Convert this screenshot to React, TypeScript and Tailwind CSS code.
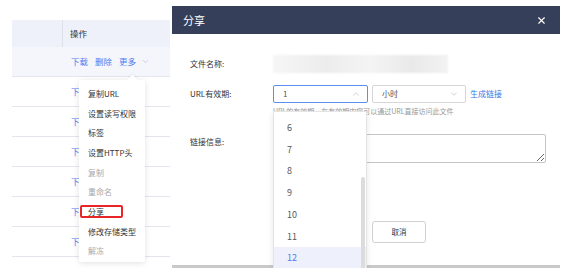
import { ChevronDown, ChevronUp, X } from "lucide-react";

const FONT = { fontFamily: '"Noto Sans CJK SC", "Noto Sans", sans-serif' };

const menuItems = [
  { label: "复制URL" },
  { label: "设置读写权限" },
  { label: "标签" },
  { label: "设置HTTP头" },
  { label: "复制", disabled: true },
  { label: "重命名", disabled: true },
  { label: "分享", marked: true },
  { label: "修改存储类型" },
  { label: "解冻", disabled: true },
];

const hours = ["6", "7", "8", "9", "10", "11", "12"];

function FileTable() {
  return (
    <div className="pt-[20px] pl-[12px] w-[170px]">
      {/* header */}
      <div className="flex h-[27px] bg-[#eef1f9] text-[8.5px] text-[#333]">
        <div className="w-[51px] border-r border-[#dde1ec]" />
        <div className="flex items-center pl-[7px]">操作</div>
      </div>
      {/* first row with actions */}
      <div className="flex h-[30px] bg-[#f5f6fb] border-b border-[#e3e6ef] text-[8.5px] text-[#4d7cf2]">
        <div className="w-[51px]" />
        <div className="flex items-center gap-[7px] pl-[8px]">
          <span>下载</span>
          <span>删除</span>
          <span className="flex items-center gap-[5px]">
            更多
            <ChevronDown size={9} strokeWidth={1.5} className="text-[#a6b4e0]" />
          </span>
        </div>
      </div>
      {[0, 1, 2, 3, 4, 5].map((i) => (
        <div key={i} className="flex h-[30px] border-b border-[#e3e6ef] text-[8.5px] text-[#4d7cf2]">
          <div className="w-[51px]" />
          <div className="flex items-center pl-[8px]">下载</div>
        </div>
      ))}
    </div>
  );
}

function MoreMenu() {
  return (
    <div className="absolute left-[79px] top-[80px] w-[66px] h-[182px] bg-white rounded-[2px] shadow-[0_1px_6px_rgba(0,0,0,0.12)] pt-[4px]">
      <div className="absolute -top-[4px] left-[50px] w-[7px] h-[7px] bg-white rotate-45 shadow-[-1px_-1px_2px_rgba(0,0,0,0.06)]" />
      {menuItems.map((it) => (
        <div
          key={it.label}
          className={`relative h-[19.7px] flex items-center pl-[9px] text-[8px] whitespace-nowrap ${
            it.disabled ? "text-[#a8a8a8]" : "text-[#333]"
          }`}
        >
          {it.marked && (
            <div className="absolute left-[1px] top-[3px] w-[43px] h-[13px] border-2 border-[#e8262a] rounded-[2px]" />
          )}
          {it.label}
        </div>
      ))}
    </div>
  );
}

function ShareDialog() {
  return (
    <div className="absolute left-[172px] top-[6px] w-[388px] h-[262px] bg-white border-b-[3px] border-[#c9c9c9] flex flex-col">
      <div className="h-[28px] bg-[#363f5a] flex items-center justify-between px-[11px] text-white">
        <span className="text-[11px]">分享</span>
        <X size={11} strokeWidth={2.5} className="mr-[2px]" />
      </div>
      <div className="relative pl-[18px] text-[8px] text-[#333]">
        <div className="flex items-center h-[18px] mt-[21px]">
          <div className="w-[83px]">文件名称:</div>
          <div className="w-[175px] h-[18px] bg-[linear-gradient(90deg,#f6f6f6,#ececec_30%,#f4f4f4_55%,#e9e9e9_80%,#f2f2f2)] blur-[1px]" />
        </div>
        <div className="flex items-center h-[18px] mt-[12px]">
          <div className="w-[83px]">URL有效期:</div>
          <div className="w-[95px] h-[18px] border border-[#5d8ef2] rounded-[2px] flex items-center justify-between pl-[9px] pr-[6px] text-[#555]">
            <span>1</span>
            <ChevronUp size={10} strokeWidth={1.5} className="text-[#b5b5b5]" />
          </div>
          <div className="ml-[4px] w-[94px] h-[18px] border border-[#d6d6d6] rounded-[2px] flex items-center justify-between pl-[9px] pr-[6px] text-[#555]">
            <span>小时</span>
            <ChevronDown size={10} strokeWidth={1.5} className="text-[#b5b5b5]" />
          </div>
          <span className="ml-[4px] text-[#3b78e7]">生成链接</span>
        </div>
        <div className="pl-[83px] mt-[2px] h-[12px] leading-[12px] text-[7px] text-[#999] whitespace-nowrap">
          URL的有效期，在有效期内您可以通过URL直接访问此文件
        </div>
        <div className="flex mt-[17px]">
          <div className="w-[83px] pt-[2px]">链接信息:</div>
          <textarea
            readOnly
            className="w-[273px] h-[29px] border border-[#c4c4c4] rounded-[2px] outline-none"
          />
        </div>
        <div className="flex pl-[120px] gap-[8px] mt-[58px]">
          <div className="w-[54px] h-[22px] rounded-[3px] bg-[#3b78e7]" />
          <div className="w-[54px] h-[22px] rounded-[3px] border border-[#d0d0d0] flex items-center justify-center text-[7.5px]">
            取消
          </div>
        </div>
        {/* hour options */}
        <div className="absolute left-[101px] top-[77px] w-[94px] h-[160px] bg-white border border-[#e4e4e4] shadow-[0_2px_6px_rgba(0,0,0,0.1)] pt-[5px]">
          {hours.map((h) => (
            <div
              key={h}
              className={`h-[21.7px] flex items-center pl-[13px] text-[9px] ${
                h === "12" ? "bg-[#eef1fb] text-[#4d7cf2]" : "text-[#555]"
              }`}
            >
              {h}
            </div>
          ))}
          <div className="absolute right-[1px] top-[65px] w-[4px] h-[100px] rounded-full bg-[#dcdcdc]" />
        </div>
      </div>
    </div>
  );
}

export default function App() {
  return (
    <div className="relative w-[571px] h-[268px] overflow-hidden bg-white" style={FONT}>
      <FileTable />
      <MoreMenu />
      <ShareDialog />
    </div>
  );
}
